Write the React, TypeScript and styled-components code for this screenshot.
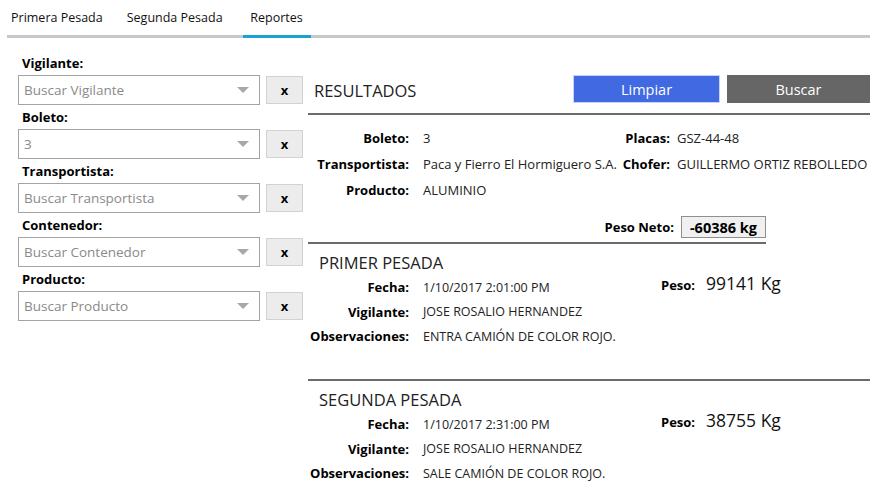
import { FC } from 'react';
import styled, { createGlobalStyle } from 'styled-components';

const GlobalStyle = createGlobalStyle`
  html, body {
    margin: 0;
    padding: 0;
    background: #ffffff;
    font-family: 'Open Sans', 'Noto Sans', sans-serif;
    color: #000;
  }
`;

const Page = styled.div`
  width: 877px;
  height: 495px;
  overflow: hidden;
  padding: 0 7px;
  box-sizing: border-box;
`;

const TabBar = styled.div`
  display: flex;
  width: 863px;
  height: 38px;
  border-bottom: 3px solid #c8c8c8;
  box-sizing: border-box;
`;

const Tab = styled.div<{ active?: boolean }>`
  padding: 9px 4px 0;
  margin-right: 16px;
  min-width: ${({ active }) => (active ? '60px' : '0')};
  text-align: center;
  font-size: 12.5px;
  color: #111;
  border-bottom: 3px solid ${({ active }) => (active ? '#1ba1d4' : 'transparent')};
  margin-bottom: -3px;
`;

const Content = styled.div`
  display: flex;
  padding-top: 16px;
`;

const Filters = styled.div`
  width: 285px;
  margin-left: 11px;
  display: flex;
  flex-direction: column;
`;

const FieldGroup = styled.div`
  display: flex;
  flex-direction: column;
  height: 54px;
`;

const FieldLabel = styled.div`
  font-size: 13px;
  font-weight: 700;
  height: 21px;
  line-height: 18px;
  padding-left: 4px;
`;

const FieldRow = styled.div`
  display: flex;
  align-items: center;
  gap: 6px;
`;

const Combo = styled.div`
  width: 242px;
  height: 30px;
  border: 1px solid #a3a3a3;
  box-sizing: border-box;
  display: flex;
  align-items: center;
  justify-content: space-between;
  padding: 0 10px 0 5px;
  font-size: 13.5px;
  color: #8a8a8a;
`;

const Arrow = styled.span`
  width: 0;
  height: 0;
  border-left: 6px solid transparent;
  border-right: 6px solid transparent;
  border-top: 6px solid #a8a8a8;
`;

const ClearButton = styled.div`
  width: 37px;
  height: 28px;
  background: #ececec;
  border: 1px solid #d2d2d2;
  box-sizing: border-box;
  display: flex;
  align-items: center;
  justify-content: center;
  font-size: 13px;
  font-weight: 700;
`;

const Results = styled.div`
  width: 562px;
  margin-left: 5px;
  margin-top: 21px;
`;

const ResultsHeader = styled.div`
  display: flex;
  align-items: flex-end;
  padding-bottom: 10px;
  border-bottom: 2px solid #6b6b6b;
`;

const ResultsTitle = styled.div`
  flex: 1;
  padding-left: 6px;
  font-size: 16.5px;
  color: #222;
  line-height: 24px;
`;

const ActionButton = styled.div<{ primary?: boolean }>`
  width: ${({ primary }) => (primary ? '147px' : '143px')};
  height: 28px;
  margin-left: ${({ primary }) => (primary ? '0' : '7px')};
  box-sizing: border-box;
  background: ${({ primary }) => (primary ? '#4169e1' : '#666666')};
  border: 1px solid ${({ primary }) => (primary ? '#c8d4f4' : '#666666')};
  color: #fff;
  font-size: 14.5px;
  display: flex;
  align-items: center;
  justify-content: center;
`;

const InfoGrid = styled.div`
  display: grid;
  grid-template-columns: 101px 211px 50px 1fr;
  grid-auto-rows: 26px;
  padding-top: 10px;
  align-items: center;
`;

const Label = styled.div`
  display: flex;
  justify-content: flex-end;
  font-size: 13px;
  font-weight: 700;
  white-space: nowrap;
`;

const Value = styled.div<{ pad?: number; size?: number }>`
  font-size: ${({ size }) => size ?? 13}px;
  color: #222;
  white-space: nowrap;
  padding-left: ${({ pad }) => pad ?? 14}px;
`;

const NetRow = styled.div`
  display: flex;
  justify-content: flex-end;
  align-items: center;
  gap: 7px;
  width: 458px;
  height: 24px;
  margin-top: 12px;
  padding-bottom: 3px;
  border-bottom: 2px solid #6b6b6b;
`;

const NetBox = styled.div`
  height: 22px;
  padding: 0 8px;
  box-sizing: border-box;
  background: #f0f0f0;
  border: 1px solid #8f8f8f;
  font-size: 14.5px;
  font-weight: 700;
  display: flex;
  align-items: center;
`;

const Divider = styled.div`
  height: 2px;
  background: #6b6b6b;
`;

const Pesada = styled.section<{ last?: boolean }>`
  height: ${({ last }) => (last ? 'auto' : '135px')};
  padding-top: 8px;
  box-sizing: border-box;
`;

const PesadaTitle = styled.div`
  font-size: 16.5px;
  color: #222;
  height: 23px;
  line-height: 22px;
  padding-left: 11px;
`;

const PesadaBody = styled.div`
  display: flex;
  align-items: flex-start;
`;

const DetailGrid = styled.div`
  display: grid;
  grid-template-columns: 101px 252px;
  grid-auto-rows: 24.5px;
  align-items: center;
`;

const PesoBlock = styled.div`
  display: flex;
  align-items: baseline;
  gap: 11px;
  margin-top: -4px;
`;

const PesoValue = styled.div`
  font-size: 17.5px;
  color: #111;
`;

interface Detail {
  title: string;
  fecha: string;
  vigilante: string;
  observaciones: string;
  peso: string;
}

const pesadas: Detail[] = [
  {
    title: 'PRIMER PESADA',
    fecha: '1/10/2017 2:01:00 PM',
    vigilante: 'JOSE ROSALIO HERNANDEZ',
    observaciones: 'ENTRA CAMIÓN DE COLOR ROJO.',
    peso: '99141 Kg',
  },
  {
    title: 'SEGUNDA PESADA',
    fecha: '1/10/2017 2:31:00 PM',
    vigilante: 'JOSE ROSALIO HERNANDEZ',
    observaciones: 'SALE CAMIÓN DE COLOR ROJO.',
    peso: '38755 Kg',
  },
];

const filters = [
  { label: 'Vigilante:', text: 'Buscar Vigilante' },
  { label: 'Boleto:', text: '3' },
  { label: 'Transportista:', text: 'Buscar Transportista' },
  { label: 'Contenedor:', text: 'Buscar Contenedor' },
  { label: 'Producto:', text: 'Buscar Producto' },
];

const PesadaSection: FC<{ item: Detail; last?: boolean }> = ({ item, last }) => (
  <Pesada last={last}>
    <PesadaTitle>{item.title}</PesadaTitle>
    <PesadaBody>
      <DetailGrid>
        <Label>Fecha:</Label>
        <Value size={12.5}>{item.fecha}</Value>
        <Label>Vigilante:</Label>
        <Value size={12.5}>{item.vigilante}</Value>
        <Label>Observaciones:</Label>
        <Value size={12.5}>{item.observaciones}</Value>
      </DetailGrid>
      <PesoBlock>
        <Label>Peso:</Label>
        <PesoValue>{item.peso}</PesoValue>
      </PesoBlock>
    </PesadaBody>
  </Pesada>
);

const App: FC = () => (
  <Page>
    <GlobalStyle />
    <TabBar>
      <Tab>Primera Pesada</Tab>
      <Tab>Segunda Pesada</Tab>
      <Tab active>Reportes</Tab>
    </TabBar>
    <Content>
      <Filters>
        {filters.map((f) => (
          <FieldGroup key={f.label}>
            <FieldLabel>{f.label}</FieldLabel>
            <FieldRow>
              <Combo>
                <span>{f.text}</span>
                <Arrow />
              </Combo>
              <ClearButton>x</ClearButton>
            </FieldRow>
          </FieldGroup>
        ))}
      </Filters>
      <Results>
        <ResultsHeader>
          <ResultsTitle>RESULTADOS</ResultsTitle>
          <ActionButton primary>Limpiar</ActionButton>
          <ActionButton>Buscar</ActionButton>
        </ResultsHeader>
        <InfoGrid>
          <Label>Boleto:</Label>
          <Value>3</Value>
          <Label>Placas:</Label>
          <Value pad={7}>GSZ-44-48</Value>
          <Label>Transportista:</Label>
          <Value>Paca y Fierro El Hormiguero S.A.</Value>
          <Label>Chofer:</Label>
          <Value pad={7}>GUILLERMO ORTIZ REBOLLEDO</Value>
          <Label>Producto:</Label>
          <Value>ALUMINIO</Value>
        </InfoGrid>
        <NetRow>
          <Label>Peso Neto:</Label>
          <NetBox>-60386 kg</NetBox>
        </NetRow>
        {pesadas.map((p, i) => (
          <div key={p.title}>
            {i > 0 && <Divider />}
            <PesadaSection item={p} last={i === pesadas.length - 1} />
          </div>
        ))}
      </Results>
    </Content>
  </Page>
);

export default App;
